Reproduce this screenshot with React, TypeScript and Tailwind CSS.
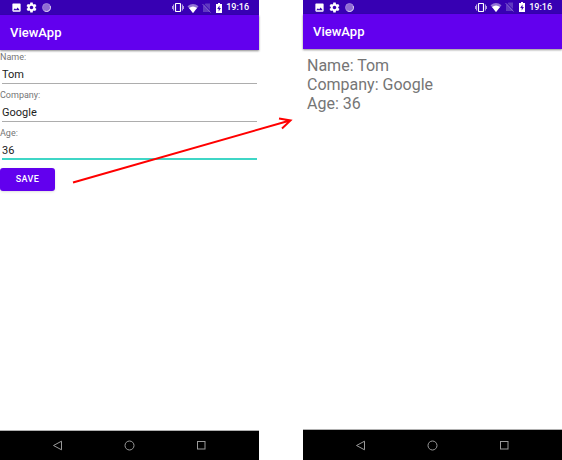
import { useState } from "react";

function StatusBar({ className }: { className: string }) {
  return (
    <div className={`flex shrink-0 items-center bg-[#3700b3] pl-[11px] pr-[10px] text-white ${className}`}>
      <svg className="size-[11px]" viewBox="0 0 24 24" fill="currentColor" aria-hidden="true">
        <path d="M21 19V5c0-1.100-.9-2-2-2H5c-1.100 0-2 .9-2 2v14c0 1.100.9 2 2 2h14c1.100 0 2-.9 2-2zM8.500 13.500l2.500 3 3.500-4.500 4.500 6H5l3.500-4.500z" />
      </svg>
      <svg className="ml-1 size-[11px]" viewBox="1 1 22 22" fill="currentColor" aria-hidden="true">
        <path d="M19.430 12.980c.04-.32.07-.64.07-.98s-.03-.66-.07-.98l2.110-1.650c.19-.15.24-.42.12-.64l-2-3.460c-.12-.22-.39-.3-.61-.22l-2.490 1c-.52-.4-1.080-.73-1.690-.98l-.38-2.650C14.460 2.180 14.250 2 14 2h-4c-.25 0-.46.18-.49.42l-.38 2.650c-.61.25-1.170.59-1.690.98l-2.490-1c-.23-.09-.49 0-.61.22l-2 3.460c-.13.22-.07.49.12.64l2.110 1.650c-.04.32-.07.65-.07.98s.03.66.07.98l-2.110 1.650c-.19.15-.24.42-.12.64l2 3.460c.12.22.39.3.61.22l2.490-1c.52.4 1.080.73 1.690.98l.38 2.650c.03.24.24.42.49.42h4c.25 0 .46-.18.49-.42l.38-2.650c.61-.25 1.170-.59 1.690-.98l2.490 1c.23.09.49 0 .61-.22l2-3.460c.12-.22.07-.49-.12-.64l-2.110-1.650zM12 15.500c-1.930 0-3.500-1.570-3.500-3.500s1.570-3.500 3.500-3.500 3.500 1.570 3.500 3.500-1.570 3.500-3.500 3.500z" />
      </svg>
      <svg className="ml-[5px] size-[9px]" viewBox="0 0 18 18" aria-hidden="true">
        <circle cx="9" cy="9" r="8" fill="#8f6bd3" stroke="#a98ce0" strokeWidth="1.500" />
        <path d="M16.500 6A8 8 0 0 1 5 16" fill="none" stroke="#d6c8f2" strokeWidth="2" />
      </svg>
      <svg className="ml-auto h-[11px] w-3" viewBox="0 0 12 11" fill="none" stroke="currentColor" aria-hidden="true">
        <rect x="3.500" y="1.500" width="5" height="8" rx="0.500" strokeWidth="1.200" />
        <path d="M1.500 2.500v6M10.500 2.500v6M.5 4v3M11.500 4v3" opacity="0.600" />
      </svg>
      <svg className="ml-[3px] h-[10px] w-3" viewBox="0 0 12 10" fill="currentColor" aria-hidden="true">
        <path d="M.5 3.300Q6-1.200 11.500 3.300L6 10z" opacity="0.450" />
        <path d="M2 5Q6 2 10 5L6 10z" />
      </svg>
      <svg className="ml-[3px] h-[10px] w-[9px]" viewBox="0 0 9 10" aria-hidden="true">
        <path d="M3.500.5H8V9H1V3z" fill="#6039c2" />
        <path d="M1.500.8 9 8.500" stroke="#3700b3" strokeWidth="1" />
        <path d="M.5 1 8.500 9.500" stroke="#8565d0" strokeWidth="0.900" />
      </svg>
      <svg className="ml-[5px] h-[10px] w-[6px]" viewBox="0 0 6 10" aria-hidden="true">
        <path d="M2 0h2v1h2v9H0V1h2z" fill="currentColor" />
        <path d="M3.500 2.500 1.200 6h1.500v2.500L4.900 5H3.500z" fill="#3700b3" />
      </svg>
      <time className="ml-1 text-[9px] leading-none font-medium">19:16</time>
    </div>
  );
}

function AppBar() {
  return (
    <header className="z-10 flex h-[35px] shrink-0 items-center bg-[#6200ee] px-[10px] shadow-[0_1px_2px_rgba(0,0,0,0.45)]">
      <h1 className="text-[13px] leading-4 font-medium text-white">ViewApp</h1>
    </header>
  );
}

function NavigationBar({ className }: { className: string }) {
  const button = "flex size-4 items-center justify-center text-[#9a9a9a]";
  return (
    <nav className={`flex shrink-0 items-center justify-center gap-14 border-t border-[#b0b0b0] bg-black ${className}`}>
      <button type="button" aria-label="Back" className={button}>
        <svg className="size-[11px]" viewBox="0 0 11 11" fill="none" stroke="currentColor" aria-hidden="true">
          <path d="M9.500 1.200v8.600L1.500 5.500z" />
        </svg>
      </button>
      <button type="button" aria-label="Home" className={button}>
        <svg className="size-[11px]" viewBox="0 0 11 11" fill="none" stroke="currentColor" aria-hidden="true">
          <circle cx="5.500" cy="5.500" r="4.500" />
        </svg>
      </button>
      <button type="button" aria-label="Recent apps" className={button}>
        <svg className="size-[11px]" viewBox="0 0 11 11" fill="none" stroke="currentColor" aria-hidden="true">
          <rect x="1.500" y="1.500" width="7.500" height="7.500" />
        </svg>
      </button>
    </nav>
  );
}

type FieldProps = {
  id: string;
  label: string;
  value: string;
  active?: boolean;
  onChange: (value: string) => void;
};

function Field({ id, label, value, active = false, onChange }: FieldProps) {
  return (
    <div className="flex h-[38px] flex-col">
      <label htmlFor={id} className="text-[9px] leading-3 text-[#757575]">
        {label}
      </label>
      <div className="flex px-[2px]">
        <input
          id={id}
          value={value}
          onChange={(event) => onChange(event.target.value)}
          className={`h-[21px] w-full min-w-0 text-[11px] text-[#212121] outline-none ${
            active ? "border-b-2 border-[#3fd6c6] pt-[3px]" : "border-b border-[#adadad] pt-[2px]"
          }`}
        />
      </div>
    </div>
  );
}

export default function App() {
  const [name, setName] = useState("Tom");
  const [company, setCompany] = useState("Google");
  const [age, setAge] = useState("36");

  return (
    <main className="relative flex min-h-screen gap-11 bg-white font-[Roboto,sans-serif]">
      <section className="flex min-w-0 flex-1 flex-col">
        <StatusBar className="h-[15px]" />
        <AppBar />
        <form className="flex-1 pt-px" onSubmit={(event) => event.preventDefault()}>
          <Field id="name" label="Name:" value={name} onChange={setName} />
          <Field id="company" label="Company:" value={company} onChange={setCompany} />
          <Field id="age" label="Age:" value={age} onChange={setAge} active />
          <button
            type="submit"
            className="mt-[3px] block h-[23px] w-[55px] rounded-[3px] bg-[#6200ee] text-[9px] font-medium tracking-wider text-white shadow-sm"
          >
            SAVE
          </button>
        </form>
        <NavigationBar className="h-[30px]" />
      </section>

      <section className="flex min-w-0 flex-1 flex-col">
        <StatusBar className="h-[14px]" />
        <AppBar />
        <div className="flex-1 px-1 pt-[7px] text-[16px] leading-[19px] text-[#757575]">
          <p>Name: {name}</p>
          <p>Company: {company}</p>
          <p>Age: {age}</p>
        </div>
        <NavigationBar className="h-[31px]" />
      </section>

      <svg
        className="pointer-events-none absolute top-[116px] left-[72px] z-20 h-[70px] w-[222px]"
        viewBox="0 0 222 70"
        fill="none"
        stroke="#ff0000"
        strokeWidth="2"
        aria-hidden="true"
      >
        <path d="M1 66.500 218 4.500M207 2.500 218.500 4.500 210 12.500" />
      </svg>
    </main>
  );
}
